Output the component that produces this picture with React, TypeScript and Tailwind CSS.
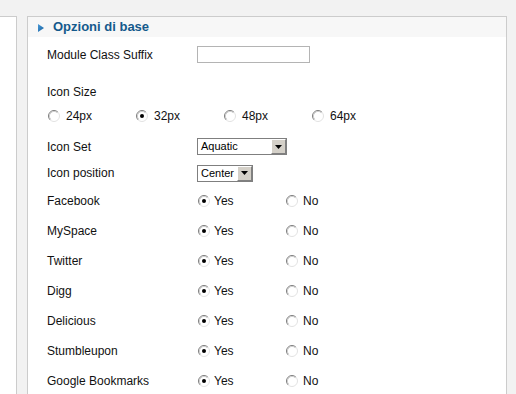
import React from 'react';

const SOCIALS = ['Facebook', 'MySpace', 'Twitter', 'Digg', 'Delicious', 'Stumbleupon', 'Google Bookmarks'];
const SIZES = ['24px', '32px', '48px', '64px'];

const Radio: React.FC<{ checked?: boolean }> = ({ checked }) => (
  <svg width="12" height="12" viewBox="0 0 12 12" className="shrink-0">
    <circle cx="6" cy="6" r="5.5" fill="#ffffff" />
    <path d="M2.11 9.89 A5.5 5.5 0 0 1 9.89 2.11" fill="none" stroke="#7c7c7c" />
    <path d="M9.89 2.11 A5.5 5.5 0 0 1 2.11 9.89" fill="none" stroke="#e2e2e2" />
    <path d="M2.82 9.18 A4.5 4.5 0 0 1 9.18 2.82" fill="none" stroke="#c4c4c4" strokeWidth="0.8" />
    {checked && <circle cx="6" cy="6" r="2" fill="#000000" />}
  </svg>
);

const Select: React.FC<{ value: string; width: string }> = ({ value, width }) => (
  <div className={`${width} h-[17px] flex items-center bg-white border border-[#7f7f7f]`}>
    <span className="flex-1 pl-[3px] text-[11px] leading-none text-black">{value}</span>
    <div className="w-[15px] h-[15px] bg-[#d4d0c8] border-t border-l border-t-white border-l-white border-b border-r border-b-[#808080] border-r-[#808080] flex items-center justify-center">
      <svg width="7" height="4" viewBox="0 0 7 4">
        <path d="M0 0 H7 L3.5 4 Z" fill="#000000" />
      </svg>
    </div>
  </div>
);

export default function App() {
  return (
    <div
      className="w-[516px] h-[394px] overflow-hidden bg-[#f2f2f2] flex items-start text-[12px] text-[#111]"
      style={{ fontFamily: '"Liberation Sans", Arial, sans-serif' }}
    >
      {/* side panel */}
      <div className="w-[17px] h-[400px] mt-4 bg-white border-t border-r border-[#cccccc]" />

      {/* options panel */}
      <div className="ml-[10px] mt-4 w-[480px] h-[400px] bg-white border border-[#cccccc] flex flex-col">
        <div className="h-[20px] bg-[#f7f7f7] flex items-center pl-[10px]">
          <svg width="6" height="8" viewBox="0 0 6 8" className="mt-[1px]">
            <defs>
              <linearGradient id="arr" x1="0" y1="0" x2="1" y2="1">
                <stop offset="0" stopColor="#4a9ad8" />
                <stop offset="1" stopColor="#145f9e" />
              </linearGradient>
            </defs>
            <path d="M0 0 L6 4 L0 8 Z" fill="url(#arr)" />
          </svg>
          <span className="ml-[9px] text-[13px] font-bold text-[#145a8c]">Opzioni di base</span>
        </div>

        <div className="flex flex-col pl-[19px] pt-[5px]">
          <div className="h-[25px] flex items-center">
            <span className="w-[150px]">Module Class Suffix</span>
            <div className="w-[113px] h-[17px] border border-[#b4b4b4] bg-white" />
          </div>

          <div className="h-[25px] mt-[12px] flex items-center">
            <span>Icon Size</span>
          </div>

          <div className="h-[24px] flex items-center pl-[1px]">
            {SIZES.map(size => (
              <div key={size} className="w-[88px] flex items-center">
                <Radio checked={size === '32px'} />
                <span className="ml-[6px]">{size}</span>
              </div>
            ))}
          </div>

          <div className="h-[27px] mt-[5px] flex items-center">
            <span className="w-[150px]">Icon Set</span>
            <Select value="Aquatic" width="w-[90px]" />
          </div>

          <div className="h-[26px] flex items-center">
            <span className="w-[150px]">Icon position</span>
            <Select value="Center" width="w-[56px]" />
          </div>

          {SOCIALS.map(name => (
            <div key={name} className="h-[30px] flex items-center">
              <span className="w-[150px]">{name}</span>
              <div className="w-[89px] flex items-center pl-[1px]">
                <Radio checked />
                <span className="ml-[4px]">Yes</span>
              </div>
              <div className="flex items-center">
                <Radio />
                <span className="ml-[5px]">No</span>
              </div>
            </div>
          ))}
        </div>
      </div>
    </div>
  );
}
